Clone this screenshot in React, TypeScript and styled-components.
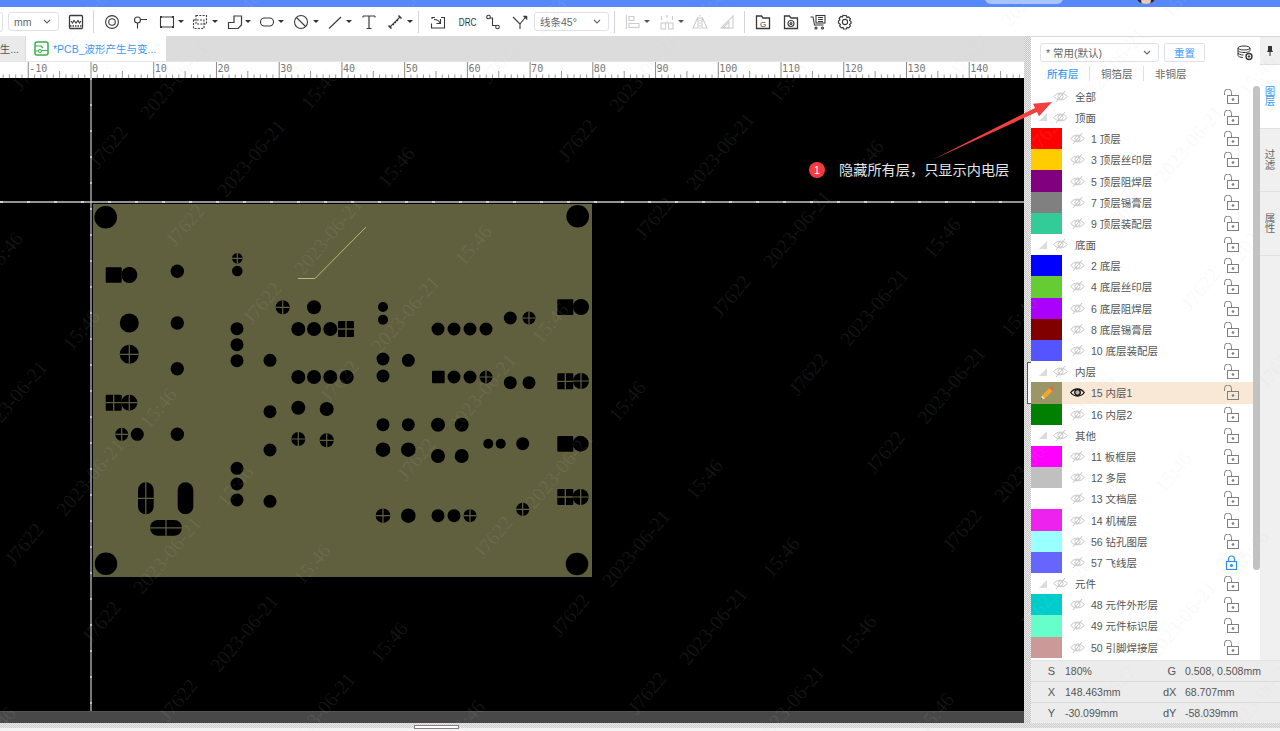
import React from 'react';
import styled, { createGlobalStyle } from 'styled-components';

const Global = createGlobalStyle`
  html, body { margin: 0; padding: 0; background: #fff; overflow: hidden; }
  * { box-sizing: border-box; }
  body { font-family: "Liberation Sans", "Noto Sans CJK SC", sans-serif; font-size: 10.5px; color: #555; }
`;

const Page = styled.div`
  position: relative; width: 1280px; height: 731px; overflow: hidden;
  display: flex; flex-direction: column;
`;
const TopBar = styled.div`
  position: relative; height: 7px; flex: none; background: #5788fb; overflow: hidden;
`;
const TopPill = styled.div`
  position: absolute; left: 985px; top: -8px; width: 78px; height: 12px; border-radius: 6px; background: #a9c3fb;
`;
const Avatar = styled.div`
  position: absolute; left: 1137px; top: -8px; width: 18px; height: 12px; border-radius: 50%;
  background: radial-gradient(circle at 50% 70%, #e8c8b8 0 35%, #2c2428 45%);
`;
const Toolbar = styled.div`
  height: 29px; flex: none; background: #fff; display: flex; align-items: center; color: #333;
`;
const Tool = styled.span<{ $gap: number; $off?: boolean }>`
  margin-left: ${p => p.$gap}px; display: inline-flex; align-items: center; flex: none;
  color: ${p => (p.$off ? '#cdcdcd' : '#3a3a3a')};
  svg { display: block; }
`;
const Caret = styled.i<{ $gap: number; $off?: boolean }>`
  display: block; margin-left: ${p => p.$gap}px; width: 0; height: 0;
  border-left: 3px solid transparent; border-right: 3px solid transparent;
  border-top: 3.5px solid ${p => (p.$off ? '#555' : '#333')};
`;
const Sep = styled.span<{ $gap: number }>`
  margin-left: ${p => p.$gap}px; width: 1px; height: 22px; background: #d4d4d4; flex: none;
`;
const EdgeBox = styled.span`
  width: 3px; height: 20px; border: 1px solid #e2e2e2; border-left: 0; border-radius: 0 3px 3px 0; flex: none;
`;
const Select = styled.div<{ $w: number; $gap?: number }>`
  margin-left: ${p => p.$gap ?? 0}px; width: ${p => p.$w}px; height: 19px; flex: none;
  border: 1px solid #dfe2e8; border-radius: 3px; background: #fff; color: #666; font-size: 10.5px;
  display: flex; align-items: center; justify-content: space-between; padding: 0 7px 0 5px;
`;
const DrcText = styled.span`
  width: 16px; text-align: center; font-size: 10.5px; font-weight: 400; color: #333; transform: scaleX(.78);
  display: block; letter-spacing: 0;
`;
const Main = styled.div`
  flex: 1; min-height: 0; display: flex;
`;
const LeftCol = styled.div`
  width: 1024px; flex: none; display: flex; flex-direction: column;
`;
const TabBar = styled.div`
  height: 26px; flex: none; background: #dcdcdc; display: flex; align-items: stretch; border-bottom: 1px solid #e6e6e6;
`;
const OffTab = styled.div`
  width: 25px; background: #eaeaea; color: #555; white-space: nowrap; display: flex; align-items: center; justify-content: flex-end; padding-right: 6px;
`;
const ActiveTab = styled.div`
  margin-left: 1px; width: 140px; background: #fff; color: #3a97f4; display: flex; align-items: center; gap: 4px; padding-left: 8px; white-space: nowrap;
`;
const RulerBox = styled.div`
  height: 16px; flex: none; background: #fff; svg { display: block; }
`;
const CanvasBox = styled.div`
  height: 633px; flex: none; background: #000; svg { display: block; }
`;
const HBar = styled.div`
  height: 12px; flex: none; background: #484848; border-top: 1px solid #555;
`;
const Splitter = styled.div`
  position: relative; width: 7px; flex: none;
  background: repeating-conic-gradient(#c4c4c4 0 25%, #ececec 0 50%) 0 0 / 2px 2px;
`;
const SplitHandle = styled.div`
  position: absolute; right: 0; top: 326px; width: 4px; height: 42px; background: #fff;
  border: 1px solid #555; border-right: 0;
`;
const RightCol = styled.div`
  width: 249px; flex: none; display: flex; flex-direction: column;
`;
const RightTop = styled.div`
  height: 624px; flex: none; display: flex; min-height: 0;
`;
const Panel = styled.div`
  width: 229px; flex: none; background: #fff; display: flex; flex-direction: column; border-top: 1px solid #d8d8d8;
`;
const PanelHead = styled.div`
  height: 19px; margin: 6px 0 0 9px; display: flex; flex: none; align-items: center;
`;
const ResetBtn = styled.button`
  margin-left: 5px; width: 41px; height: 19px; border: 1px solid #dfe2e8; border-radius: 2px; background: #fff;
  color: #3f9bf5; font: inherit; padding: 0;
`;
const HeadIcon = styled.span`
  margin-left: 32px; display: block; svg { display: block; }
`;
const SubTabs = styled.div`
  height: 23.7px; flex: none; display: flex; align-items: center; padding-left: 16px;
`;
const SubTab = styled.span<{ $on?: boolean }>`
  color: ${p => (p.$on ? '#3f9bf5' : '#666')}; width: 54px; flex: none; position: relative;
  font-weight: ${p => (p.$on ? 500 : 400)};
  &:not(:last-child)::after {
    content: ''; position: absolute; right: 11px; top: 0; bottom: 0; width: 1px; background: #e0e0e0;
  }
`;
const ListWrap = styled.div`
  flex: 1; min-height: 0; display: flex; overflow: hidden;
`;
const List = styled.div`
  width: 222px; flex: none;
`;
const Row = styled.div<{ $hi?: boolean }>`
  height: 21.2px; display: flex; align-items: center; background: ${p => (p.$hi ? '#f8e8d5' : 'transparent')};
  color: #555;
`;
const Swatch = styled.span<{ $c: string }>`
  width: 31px; height: 100%; flex: none; background: ${p => p.$c}; display: flex; align-items: center; justify-content: center;
  svg { display: block; }
`;
const GroupCell = styled.span`
  width: 22px; height: 100%; flex: none; display: flex; align-items: center; justify-content: center; padding-left: 0;
`;
const Tri = styled.i`
  display: block; width: 0; height: 0; border-left: 8px solid transparent; border-bottom: 8px solid #dcdcdc; margin-left: 2px;
`;
const EyeBox = styled.span<{ $gap: number }>`
  margin-left: ${p => p.$gap}px; width: 15px; flex: none; svg { display: block; }
`;
const RowLabel = styled.span<{ $gap: number }>`
  margin-left: ${p => p.$gap}px; white-space: pre; flex: none;
`;
const LockBox = styled.span`
  margin-left: auto; margin-right: 14px; flex: none; svg { display: block; }
`;
const ScrollTrack = styled.div`
  width: 7px; flex: none; height: 100%; background: #fff;
`;
const ScrollThumb = styled.div`
  width: 7px; height: 484px; border-radius: 4px; background: #c2c2c2;
`;
const SideTabs = styled.div`
  width: 20px; flex: none; background: #f0f0f0; display: flex; flex-direction: column; border-top: 1px solid #d8d8d8;
`;
const PinCell = styled.div`
  height: 28px; flex: none; display: flex; align-items: center; justify-content: center; border-bottom: 1px solid #e0e0e0;
`;
const SideTab = styled.div<{ $on?: boolean }>`
  height: 63.5px; flex: none; display: flex; align-items: center; justify-content: center;
  background: ${p => (p.$on ? '#fff' : 'transparent')}; color: ${p => (p.$on ? '#3f9bf5' : '#666')};
  border-bottom: 1px solid #e0e0e0;
`;
const SideText = styled.span`
  display: block; width: 11px; line-height: 10.5px; font-size: 10.5px; text-align: center; word-break: break-all;
`;
const Status = styled.div`
  height: 63px; flex: none; background: #ececec;
`;
const StatusRow = styled.div`
  height: 21px; display: flex; align-items: center; border-top: 1px solid #dcdcdc; color: #555; white-space: nowrap;
  &:first-child { border-top-color: #e4e4e4; }
`;
const StatLabel = styled.span<{ $w: number }>`
  width: ${p => p.$w}px; text-align: right; flex: none; font-size: 11px;
`;
const StatValue = styled.span<{ $w: number; $gap: number }>`
  margin-left: ${p => p.$gap}px; width: ${p => p.$w}px; flex: none;
`;
const BottomStrip = styled.div`
  position: relative; height: 8px; flex: none;
  background: linear-gradient(#0000 5px, #f4f4f4 5px), repeating-conic-gradient(#cfcfcf 0 25%, #e8e8e8 0 50%) 0 0 / 2px 2px;
`;
const SlideHandle = styled.div`
  position: absolute; left: 414px; top: 2px; width: 45px; height: 4px; background: #fff; border: 1px solid #8a7f7f;
`;
const Note = styled.div`
  position: absolute; left: 809px; top: 162px; display: flex; align-items: center; gap: 14px; color: #e4e4e4; font-size: 14.2px; line-height: 16px; white-space: nowrap;
`;
const Badge = styled.span`
  width: 16px; height: 16px; border-radius: 50%; background: #f43b3f; color: #fff; font-size: 10.5px; text-align: center; line-height: 16px;
`;
const ArrowLayer = styled.svg`
  position: absolute; left: 0; top: 0; pointer-events: none;
`;
const Marks = styled.div`
  position: absolute; inset: 0; overflow: hidden; pointer-events: none;
`;
const Mark = styled.span`
  position: absolute; font-family: "Liberation Serif", serif; font-size: 20px; line-height: 20px; color: rgba(205,205,205,.1);
  transform: translate(-50%, -50%) rotate(-50deg); white-space: nowrap;
`;

type P = { w?: number; h?: number; children?: React.ReactNode };
const Ico = ({ w = 16, h = 16, children }: P) => (
  <svg width={w} height={h} viewBox={`0 0 ${w} ${h}`} fill="none" stroke="currentColor" strokeWidth={1.1}>{children}</svg>
);
const Chevron = () => (
  <svg width="8" height="5" viewBox="0 0 8 5" fill="none" stroke="#666" strokeWidth="1.1"><path d="M1 1l3 3 3-3" /></svg>
);

const icons: Record<string, React.ReactNode> = {
  wave: <Ico><rect x="1.5" y="1.5" width="13" height="13" rx="1" strokeWidth="1.3" /><path d="M3 7l1.5 2L6 6.5 8 9l2-2.500L11.500 9 13 7" /><path d="M2 12h12" strokeWidth="1.6" strokeDasharray="1.500 1" /></Ico>,
  ring: <Ico><circle cx="8" cy="8" r="6.400" /><circle cx="8" cy="8" r="3.300" /></Ico>,
  pin: <Ico><circle cx="5.500" cy="6" r="3" /><path d="M5.500 9v5.500M8.500 5.500H15" /></Ico>,
  rect: <Ico><rect x="1.500" y="3" width="13" height="10" rx="1" /><path d="M1 3h2M1 13h2M13 3h2M13 13h2" strokeWidth="2" /></Ico>,
  dash: <Ico><rect x="4" y="1.500" width="10.500" height="8.500" strokeDasharray="2 1.300" /><rect x="1.500" y="6" width="10.500" height="8.500" strokeDasharray="2 1.300" /></Ico>,
  poly: <Ico><path d="M1.500 14.500V8.500h5.500V2h7.500v9l-3.500 3.500z" strokeWidth="1.200" /></Ico>,
  oval: <Ico><rect x="1.500" y="4" width="13" height="8" rx="4" /></Ico>,
  no: <Ico><circle cx="8" cy="8" r="6.500" /><path d="M3.500 3.500l9 9" /></Ico>,
  line: <Ico><path d="M2 14.500L14 3" /></Ico>,
  text: <Ico><path d="M2 2h12M8 2v12M5.500 14.500h5" strokeWidth="1.200" /><path d="M2 2v1.500M14 2v1.500" /></Ico>,
  measure: <Ico><path d="M3 13L13 3" /><path d="M1.500 11.500l3 3M11.500 1.500l3 3" strokeWidth="1.500" /><path d="M6 10l1 1M8 8l1 1M10 6l1 1" /></Ico>,
  import: <Ico><path d="M2 5V3.500h3M1.500 9.500V14h13V3.500H11" /><path d="M4 5.500c3 0 5 1 6 3.500M10.500 5v4.500H6.500" /></Ico>,
  route: <Ico><circle cx="3.500" cy="3" r="1.800" /><circle cx="12.500" cy="13" r="1.800" /><path d="M5 4h2.500v7.500h3.500" /></Ico>,
  diag: <Ico><path d="M1 3l7 7v5M8 10l6-7.500" /><path d="M11 2h4v4" fill="currentColor" strokeWidth=".5" /></Ico>,
  alignL: <Ico><path d="M1.500 1v14" /><rect x="4" y="2.500" width="5" height="4" /><rect x="4" y="9.500" width="10" height="4" /></Ico>,
  alignC: <Ico><path d="M8 1v3M8 7v3" /><rect x="2" y="9" width="4.500" height="6" /><rect x="9.500" y="9" width="4.500" height="6" /><path d="M2.500 2v4M13.500 2v4" /></Ico>,
  flipA: <Ico><path d="M8 1v14" strokeDasharray="1.500 1" /><path d="M6 3v11H1zM10 3l5 11h-5z" /></Ico>,
  flipB: <Ico><path d="M14 2v12H2z" /><path d="M10 8v6H4z" /></Ico>,
  fileG: <Ico><path d="M1.500 2h5l1.500 2h6.500v10.500h-13z" strokeWidth="1.300" /><text x="8" y="12.500" fontSize="8" textAnchor="middle" fill="currentColor" stroke="none" fontFamily="Liberation Sans">G</text></Ico>,
  fileD: <Ico><path d="M1.500 2h5l1.500 2h6.500v10.500h-13z" strokeWidth="1.300" /><circle cx="8" cy="9.500" r="3" /><circle cx="8" cy="9.500" r="1" /></Ico>,
  cart: <Ico><path d="M.5 3h2.500l1.500 8h9" /><rect x="6" y="1.500" width="9" height="7.500" /><path d="M8 3.500h5M8 5.500h5M8 7.500h5" /><circle cx="6" cy="14" r="1" /><circle cx="12.500" cy="14" r="1" /></Ico>,
  gear: <Ico><path d="M8 1.500l1.500.3.500 1.700 1.700-.5 1.700 1.900-.8 1.500 1.400 1.200v1.800l-1.400 1.100.8 1.500-1.700 1.900-1.700-.5-.5 1.600H6.500l-.5-1.600-1.700.5-1.700-1.900.8-1.500L1.500 8.900V7.100l1.400-1.200-.8-1.500 1.700-1.900 1.700.5.5-1.700z" strokeWidth="1.200" /><circle cx="8" cy="8" r="2.600" /></Ico>,
};

type T = { k: string; g: number; c?: number; off?: boolean };
const group1: T[] = [
  { k: 'ring', g: 10 }, { k: 'pin', g: 12 }, { k: 'rect', g: 11, c: 3 }, { k: 'dash', g: 8, c: 4 },
  { k: 'poly', g: 9, c: 2 }, { k: 'oval', g: 8, c: 3 }, { k: 'no', g: 9, c: 4 }, { k: 'line', g: 8, c: 3 },
  { k: 'text', g: 9 }, { k: 'measure', g: 10, c: 4 },
];
const group3: T[] = [
  { k: 'alignL', g: 10, c: 3, off: true }, { k: 'alignC', g: 9, c: 3, off: true },
  { k: 'flipA', g: 8, off: true }, { k: 'flipB', g: 11, off: true },
];
const group4: T[] = [{ k: 'fileG', g: 10 }, { k: 'fileD', g: 12 }, { k: 'cart', g: 11 }, { k: 'gear', g: 11 }];

const Tools = ({ items }: { items: T[] }) => (
  <>
    {items.map(t => (
      <React.Fragment key={t.k}>
        <Tool $gap={t.g} $off={t.off}>{icons[t.k]}</Tool>
        {t.c !== undefined && <Caret $gap={t.c} $off={t.off} />}
      </React.Fragment>
    ))}
  </>
);

const TabIcon = () => (
  <svg width="15" height="15" viewBox="0 0 15 15" fill="none" stroke="#3cae4a" strokeWidth="1.500">
    <rect x="1" y="1" width="13" height="13" rx="2" />
    <path d="M1 5h6l2 2M1 10h3M8 9.500h6" strokeWidth="1.200" />
    <circle cx="6" cy="10" r="1.500" strokeWidth="1.100" />
  </svg>
);

const Ruler = () => {
  const ticks: React.ReactNode[] = [];
  for (let i = -14; i <= 148; i++) {
    const x = 91 + i * 6.273;
    const major = i % 10 === 0;
    const mid = i % 5 === 0;
    ticks.push(<line key={i} x1={x} x2={x} y1={major ? 0 : mid ? 9 : 12.5} y2={16} stroke={major ? '#8a8a8a' : '#9a9a9a'} strokeWidth="1" />);
    if (major) ticks.push(<text key={`t${i}`} x={x + 1} y={10} fontFamily="DejaVu Sans Mono" fontSize="10" fill="#777">{i}</text>);
  }
  return <svg width="1024" height="16">{ticks}</svg>;
};

const OL = '#60603f';
const circles = [
  [105.7,217.3,11.3],[577.7,216.3,11.3],[106,563.7,11.3],[577,564,11.3],[129.3,275,8],[177.3,271.3,6.7],[237.3,271,5.300],
  [129.3,323,9.5],[177.3,323,6.7],[177.3,368.7,6.7],[314,307.3,7],[237,328.7,6.5],[237,344.700,6.5],[237,360.700,6.5],[270,360.300,6.5],
  [298.3,329,7],[314,329,7],[330.3,329,7],[298.3,377,7],[314,377,7],[330.3,377,7],[346.7,377,7],
  [383,307,5],[383,319.7,5],[438,329,6.5],[454,329,6.5],[470,329,6.5],[486,329,6.5],[510.3,318,6.5],[581,307,8],
  [383,359,6.5],[408.3,360.3,6.5],[383,376,6.5],[454,377,6.5],[470,377,6.5],[510.3,382.7,6.5],[529,382.7,6.5],
  [270,411.7,6.5],[298.3,407.7,7],[326.7,409,7],[137.3,434.3,6.5],[177.3,434.3,6.7],[270,450,6.5],
  [237,468.3,6.5],[237,484,6.5],[237,500,6.5],[270,501.3,6.5],
  [383,424.7,6.5],[408.3,424.7,6.5],[438,424.7,7],[461.7,424.7,7],[383,449.7,7.3],[408.3,449.7,7.3],[438,456,7],[461.7,456,7],
  [488.3,443.7,5],[500.7,443.7,5],[522.7,443.7,6.5],[580.7,443.7,8],[408.3,515.7,7.3],[438,515.7,6.5],[454,515.7,6.5],
];
const crossed = [
  [237.3,258.3,5.3],[129.3,354.3,9.5],[282.7,307.3,7],[529,318,6.5],[486,377,6.5],[581,381,8],[129.3,402.7,8],[121.7,434.3,6.5],
  [298.3,439,7],[326.7,440.3,7],[580.7,497,8],[383,515.7,7.3],[470,515.7,6.5],[522.7,509.3,6.5],
];
const squares = [[105.7,267.3,16,15.4],[557.3,299.3,16,15.7],[432,370.7,12.7,12.6],[557.3,436,16,15.7]];
const crossSquares = [[338,321,16,16],[557.3,373.3,16,16],[105.7,394.7,16,16],[557.3,489,16,16]];

const Board = () => (
  <svg width="1024" height="633" viewBox="0 78 1024 633">
    <rect x="93" y="204" width="499" height="373" fill={OL} />
    <path d="M298 278.500h17L366 227" stroke="#b9b97c" strokeWidth="1" fill="none" />
    {circles.map(([x, y, r]) => <circle key={`${x}-${y}`} cx={x} cy={y} r={r} fill="#000" />)}
    {squares.map(([x, y, w, h]) => <rect key={`${x}-${y}`} x={x} y={y} width={w} height={h} rx="1" fill="#000" />)}
    {crossSquares.map(([x, y, w, h]) => (
      <g key={`${x}-${y}`}>
        <rect x={x} y={y} width={w} height={h} rx="1" fill="#000" />
        <path d={`M${x + w / 2} ${y}v${h}M${x} ${y + h / 2}h${w}`} stroke={OL} strokeWidth="1.300" />
      </g>
    ))}
    {crossed.map(([x, y, r]) => (
      <g key={`${x}-${y}`}>
        <circle cx={x} cy={y} r={r} fill="#000" />
        <path d={`M${x} ${y - r}v${2 * r}M${x - r} ${y}h${2 * r}`} stroke={OL} strokeWidth="1.200" />
      </g>
    ))}
    <rect x="138" y="482.300" width="15.700" height="32" rx="7.800" fill="#000" />
    <path d="M145.800 482.300v32M138 498.300h15.700" stroke={OL} strokeWidth="1.200" />
    <rect x="177.700" y="482.300" width="15.600" height="32" rx="7.800" fill="#000" />
    <rect x="150" y="520" width="32" height="15.700" rx="7.800" fill="#000" />
    <path d="M166 520v15.700M150 527.800h32" stroke={OL} strokeWidth="1.200" />
    <path d="M91 78v633" stroke="#c9c9c9" strokeWidth="1.200" />
    <path d="M91 78v633" stroke="#ececec" strokeWidth="1.200" strokeDasharray="2 24" />
    <path d="M0 202h1024" stroke="#c4c4c4" strokeWidth="1.300" />
    <path d="M0 202h1024" stroke="#e8e8e8" strokeWidth="1.300" strokeDasharray="3 24" />
  </svg>
);

const EyeOff = () => (
  <svg width="15" height="13" viewBox="0 0 15 13" fill="none" stroke="#c6c6c6" strokeWidth="1">
    <path d="M.8 6.500C4 2 11 2 14.200 6.500 11 11 4 11 .8 6.500z" />
    <circle cx="7.500" cy="6.500" r="2.600" />
    <path d="M3 12L12 1" />
  </svg>
);
const EyeOn = () => (
  <svg width="15" height="13" viewBox="0 0 15 13" fill="none" stroke="#111" strokeWidth="1.300">
    <path d="M.8 6.500C4 1.800 11 1.800 14.200 6.500 11 11.200 4 11.200 .8 6.500z" />
    <circle cx="7.500" cy="6.500" r="2.800" fill="#111" fillOpacity=".25" />
  </svg>
);
const LockOpen = () => (
  <svg width="15" height="15" viewBox="0 0 15 15" fill="none" stroke="#808080" strokeWidth="1">
    <rect x="3.500" y="6.500" width="11" height="8" />
    <path d="M.5 6V3.500a3.500 3.500 0 0 1 7 0V6.500" />
    <circle cx="9" cy="10.500" r=".9" fill="#808080" />
  </svg>
);
const LockShut = () => (
  <svg width="15" height="15" viewBox="0 0 15 15" fill="none" stroke="#2e8cf4" strokeWidth="1.200">
    <rect x="2.500" y="6.500" width="10" height="8" />
    <path d="M4.500 6.500V4a3 3 0 0 1 6 0v2.500" />
    <circle cx="7.500" cy="10.500" r=".9" fill="#2e8cf4" />
  </svg>
);
const Pencil = () => (
  <svg width="16" height="16" viewBox="0 0 16 16">
    <path d="M3 10.500l7.500-7.500 3 3L6 13.500z" fill="#f5a623" />
    <path d="M10.500 3l1.500-1.500a1 1 0 0 1 1.300 0l1.200 1.200a1 1 0 0 1 0 1.300L13 5.500z" fill="#e8605a" />
    <path d="M3 10.500l3 3-4 1z" fill="#f6e3c0" />
    <path d="M2 14.500l.5-1.700 1.200 1.200z" fill="#333" />
  </svg>
);

type L = { label: string; color?: string; group?: boolean; noTri?: boolean; active?: boolean; shut?: boolean };
const layers: L[] = [
  { label: '全部', group: true, noTri: true },
  { label: '顶面', group: true },
  { label: '1 顶层', color: '#ff0000' }, { label: '3 顶层丝印层', color: '#ffcc00' }, { label: '5 顶层阻焊层', color: '#800080' },
  { label: '7 顶层锡膏层', color: '#808080' }, { label: '9 顶层装配层', color: '#33cc99' },
  { label: '底面', group: true },
  { label: '2 底层', color: '#0000ff' }, { label: '4 底层丝印层', color: '#66cc33' }, { label: '6 底层阻焊层', color: '#aa00ff' },
  { label: '8 底层锡膏层', color: '#800000' }, { label: '10 底层装配层', color: '#5555ff' },
  { label: '内层', group: true },
  { label: '15 内层1', color: '#9a9668', active: true }, { label: '16 内层2', color: '#008000' },
  { label: '其他', group: true },
  { label: '11 板框层', color: '#ff00ff' }, { label: '12 多层', color: '#c0c0c0' }, { label: '13 文档层', color: '#ffffff' },
  { label: '14 机械层', color: '#ee22ee' }, { label: '56 钻孔图层', color: '#99ffff' }, { label: '57 飞线层', color: '#6666ff', shut: true },
  { label: '元件', group: true },
  { label: '48 元件外形层', color: '#00cccc' }, { label: '49 元件标识层', color: '#66ffcc' }, { label: '50 引脚焊接层', color: '#cc9999' },
];

const LayerRow = ({ l }: { l: L }) => (
  <Row $hi={l.active}>
    {l.group ? (
      <>
        <GroupCell>{!l.noTri && <Tri />}</GroupCell>
        <EyeBox $gap={0}><EyeOff /></EyeBox>
        <RowLabel $gap={7}>{l.label}</RowLabel>
      </>
    ) : (
      <>
        <Swatch $c={l.color as string}>{l.active && <Pencil />}</Swatch>
        <EyeBox $gap={8}>{l.active ? <EyeOn /> : <EyeOff />}</EyeBox>
        <RowLabel $gap={6}>{l.label}</RowLabel>
      </>
    )}
    <LockBox>{l.shut ? <LockShut /> : <LockOpen />}</LockBox>
  </Row>
);

const ax = 77, ay = 78, bx = 469, by = -7;
const bases: [string, number, number][] = [['J7622', 108, 147], ['2023-06-21', 251, 158], ['15:46', 396, 167]];
const marks: { t: string; x: number; y: number }[] = [];
bases.forEach(([t, x0, y0]) => {
  for (let n = -2; n <= 3; n++) {
    for (let m = -3; m <= 9; m++) {
      const x = x0 + m * ax + n * bx;
      const y = y0 + m * ay + n * by;
      if (x > -50 && x < 1330 && y > -50 && y < 780) marks.push({ t, x, y });
    }
  }
});

const stats = [
  ['S', '180%', 'G', '0.508, 0.508mm'],
  ['X', '148.463mm', 'dX', '68.707mm'],
  ['Y', '-30.099mm', 'dY', '-58.039mm'],
];

export default function App() {
  return (
    <Page>
      <Global />
      <TopBar><TopPill /><Avatar /></TopBar>
      <Toolbar>
        <EdgeBox />
        <Select $w={51} $gap={5}><span>mm</span><Chevron /></Select>
        <Tool $gap={9}>{icons.wave}</Tool>
        <Sep $gap={9} />
        <Tools items={group1} />
        <Sep $gap={5} />
        <Tool $gap={11}>{icons.import}</Tool>
        <Tool $gap={11}><DrcText>DRC</DrcText></Tool>
        <Tool $gap={12}>{icons.route}</Tool>
        <Tool $gap={11}>{icons.diag}</Tool>
        <Select $w={75} $gap={6}><span>线条45°</span><Chevron /></Select>
        <Sep $gap={5} />
        <Tools items={group3} />
        <Sep $gap={9} />
        <Tools items={group4} />
      </Toolbar>
      <Main>
        <LeftCol>
          <TabBar>
            <OffTab>生...</OffTab>
            <ActiveTab><TabIcon /><span>*PCB_波形产生与变...</span></ActiveTab>
          </TabBar>
          <RulerBox><Ruler /></RulerBox>
          <CanvasBox><Board /></CanvasBox>
          <HBar />
        </LeftCol>
        <Splitter><SplitHandle /></Splitter>
        <RightCol>
          <RightTop>
            <Panel>
              <PanelHead>
                <Select $w={119}><span>* 常用(默认)</span><Chevron /></Select>
                <ResetBtn>重置</ResetBtn>
                <HeadIcon>
                  <svg width="16" height="16" viewBox="0 0 16 16" fill="none" stroke="#333" strokeWidth="1">
                    <ellipse cx="7" cy="3" rx="6" ry="2" />
                    <path d="M1 3v2.500c0 1.100 2.700 2 6 2s6-.9 6-2V3M1 5.500V8c0 1.100 2.700 2 5.500 2M1 8v2.500c0 1 2.200 1.800 5 2" />
                    <circle cx="12" cy="11.500" r="3" strokeWidth="1.400" />
                    <circle cx="12" cy="11.500" r=".8" fill="#333" />
                  </svg>
                </HeadIcon>
              </PanelHead>
              <SubTabs>
                <SubTab $on>所有层</SubTab>
                <SubTab>铜箔层</SubTab>
                <SubTab>非铜层</SubTab>
              </SubTabs>
              <ListWrap>
                <List>{layers.map(l => <LayerRow key={l.label} l={l} />)}</List>
                <ScrollTrack><ScrollThumb /></ScrollTrack>
              </ListWrap>
            </Panel>
            <SideTabs>
              <PinCell>
                <svg width="8" height="12" viewBox="0 0 8 12" fill="#333"><path d="M2 1h4v4l1 2H1l1-2zM3.500 7h1v4h-1z" /></svg>
              </PinCell>
              <SideTab $on><SideText>图层</SideText></SideTab>
              <SideTab><SideText>过滤</SideText></SideTab>
              <SideTab><SideText>属性</SideText></SideTab>
            </SideTabs>
          </RightTop>
          <Status>
            {stats.map(s => (
              <StatusRow key={s[0]}>
                <StatLabel $w={24}>{s[0]}</StatLabel>
                <StatValue $gap={10} $w={98}>{s[1]}</StatValue>
                <StatLabel $w={13}>{s[2]}</StatLabel>
                <StatValue $gap={9} $w={90}>{s[3]}</StatValue>
              </StatusRow>
            ))}
          </Status>
        </RightCol>
      </Main>
      <BottomStrip><SlideHandle /></BottomStrip>
      <Note><Badge>1</Badge><span>隐藏所有层，只显示内电层</span></Note>
      <ArrowLayer width="1280" height="731">
        <path d="M932 160L1035 108 1033 103.700 1052 102 1039 116.300 1037 112z" fill="#f0403f" />
      </ArrowLayer>
      <Marks>{marks.map(m => <Mark key={`${m.t}${m.x}${m.y}`} style={{ left: m.x, top: m.y }}>{m.t}</Mark>)}</Marks>
    </Page>
  );
}
